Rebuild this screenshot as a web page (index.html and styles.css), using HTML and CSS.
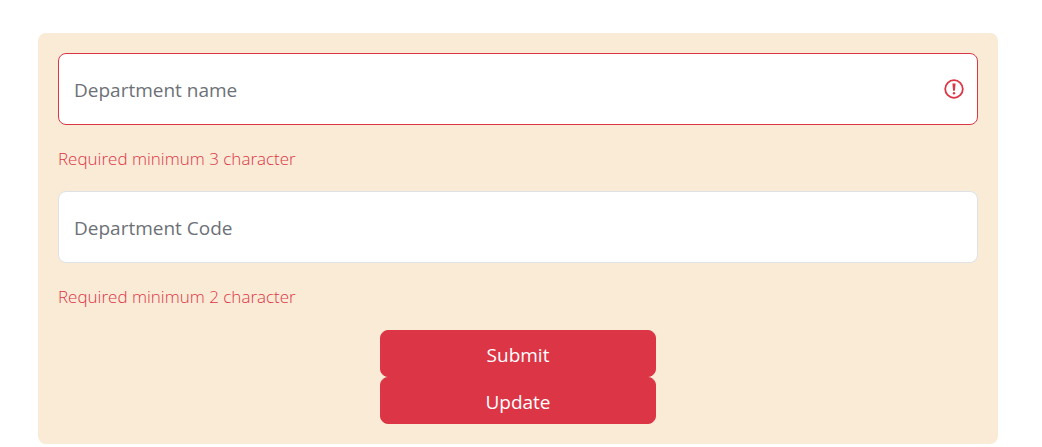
FILE: index.html
```html
<!DOCTYPE html>
<html lang="en">
<head>
<meta charset="utf-8">
<title>Department</title>
<link rel="stylesheet" href="styles.css">
</head>
<body>
<form class="card" novalidate>
  <div class="field">
    <div class="control">
      <input class="input input-invalid" type="text" placeholder="Department name" aria-label="Department name" aria-describedby="name-error" aria-invalid="true">
      <svg class="alert-icon" viewBox="0 0 20 20" aria-hidden="true">
        <circle cx="10" cy="10" r="8.8" fill="none" stroke="currentColor" stroke-width="1.8"/>
        <path d="M8.4 4.6h3.2l-.7 7.2H9.1z" fill="currentColor"/>
        <circle cx="10" cy="14.3" r="1.2" fill="currentColor"/>
      </svg>
    </div>
    <p class="error" id="name-error">Required minimum 3 character</p>
  </div>
  <div class="field">
    <div class="control">
      <input class="input" type="text" placeholder="Department Code" aria-label="Department Code" aria-describedby="code-error">
    </div>
    <p class="error" id="code-error">Required minimum 2 character</p>
  </div>
  <div class="actions">
    <button class="button" type="submit">Submit</button>
    <button class="button" type="button">Update</button>
  </div>
</form>
</body>
</html>
```
FILE: styles.css
```css
* {
  box-sizing: border-box;
}

body {
  margin: 0;
  padding: 33px 44px 3px 38px;
  background: #fff;
  font-family: "Segoe UI", "Open Sans", "Noto Sans", sans-serif;
}

.card {
  padding: 20px;
  border-radius: 8px;
  background: #faebd7;
}

.control {
  position: relative;
}

.input {
  display: block;
  width: 100%;
  height: 72px;
  padding: 10px 48px 8px 15px;
  border: 1px solid #dee2e6;
  border-radius: 8px;
  background: #fff;
  color: #212529;
  font-family: inherit;
  font-size: 19px;
}

.input::placeholder {
  color: #6d7177;
  opacity: 1;
}

.input-invalid {
  border-color: #dc3545;
}

.alert-icon {
  position: absolute;
  top: 0;
  bottom: 0;
  right: 14px;
  width: 20px;
  height: 20px;
  margin: auto 0;
  color: #dc3545;
}

.error {
  margin: 0;
  padding: 20px 0 19px;
  color: #dc3545;
  font-size: 17px;
  font-weight: 300;
  line-height: 27px;
}

.actions {
  display: flex;
  flex-direction: column;
  align-items: center;
  padding-top: 1px;
}

.button {
  width: 30%;
  padding: 11px 12px 7px;
  border: 1px solid #dc3545;
  border-radius: 8px;
  background: #dc3545;
  color: #fff;
  font-family: inherit;
  font-size: 19px;
  line-height: 27px;
}
```
